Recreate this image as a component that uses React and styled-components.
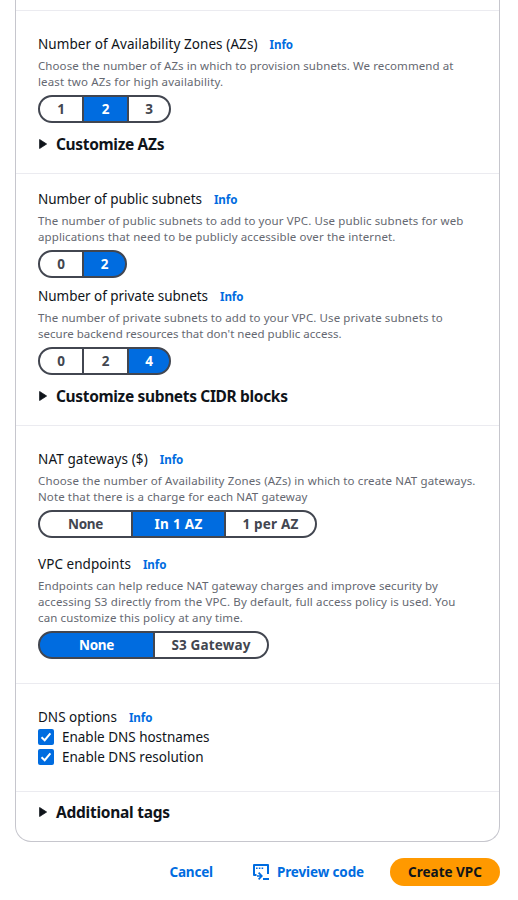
import React from 'react';
import styled, { createGlobalStyle } from 'styled-components';

const color = {
  text: '#0f141a',
  muted: '#656871',
  control: '#424650',
  blue: '#006ce0',
  orange: '#ff9900',
  border: '#c6c6cd',
  divider: '#ebebf0',
};

const GlobalStyle = createGlobalStyle`
  * { box-sizing: border-box; }
  body {
    margin: 0;
    background: #fff;
    color: ${color.text};
    font-family: 'Noto Sans', 'Open Sans', sans-serif;
    font-size: 13.5px;
    line-height: 20px;
  }
  button { font-family: inherit; margin: 0; }
`;

const Page = styled.main`
  width: 518px;
  height: 900px;
  padding: 0 18px 0 15px;
  overflow: hidden;
`;

const Card = styled.div`
  height: 842px;
  border: 1px solid ${color.border};
  border-top: 0;
  border-radius: 0 0 16px 16px;
  padding-top: 10px;
`;

const Section = styled.section`
  height: ${(p) => p.$height}px;
  padding: ${(p) => p.$top ?? 23}px 22px 0;
  border-top: 1px solid ${color.divider};
`;

const Field = styled.div`
  display: flex;
  flex-direction: column;
  align-items: flex-start;
  margin-bottom: ${(p) => p.$after ?? 0}px;
`;

const LabelRow = styled.div`
  display: flex;
  align-items: center;
  gap: 12px;
  height: 20px;
`;

const Label = styled.span`
  white-space: nowrap;
  letter-spacing: ${(p) => p.$track ?? 0}px;
`;

const InfoLink = styled.a`
  padding-top: 1px;
  color: ${color.blue};
  font-size: 11.6px;
  font-weight: 700;
  letter-spacing: -0.1px;
`;

const Description = styled.div`
  margin: 4px 0 5px;
`;

const Line = styled.div`
  color: ${color.muted};
  font-size: 11.5px;
  line-height: 16px;
  white-space: nowrap;
  letter-spacing: ${(p) => p.$track}px;
`;

const Segments = styled.div`
  display: flex;
  height: 28px;
  border: 2px solid ${color.control};
  border-radius: 14px;
  background: ${color.control};
  gap: 2px;
  overflow: hidden;
`;

const Segment = styled.button`
  width: ${(p) => p.$width}px;
  padding: 0;
  border: 0;
  background: ${(p) => (p.$on ? color.blue : '#fff')};
  color: ${(p) => (p.$on ? '#fff' : color.control)};
  font-size: 13.5px;
  font-weight: 700;
  line-height: 24px;
  white-space: nowrap;
  letter-spacing: ${(p) => p.$track ?? 0}px;
`;

const ExpandRow = styled.div`
  display: flex;
  align-items: center;
  gap: 9px;
  height: 22px;
  margin-top: ${(p) => p.$top ?? 0}px;
  padding-left: 1px;
`;

const ExpandTitle = styled.span`
  font-size: 15.5px;
  font-weight: 700;
  line-height: 22px;
  white-space: nowrap;
  letter-spacing: ${(p) => p.$track}px;
`;

const CheckRow = styled.label`
  display: flex;
  align-items: center;
  gap: 8px;
  height: 20px;
`;

const CheckBox = styled.span`
  display: flex;
  width: 16px;
  height: 16px;
  border-radius: 2px;
  background: ${color.blue};
`;

const Footer = styled.footer`
  display: flex;
  align-items: center;
  justify-content: flex-end;
  height: 28px;
  margin-top: 16px;
`;

const TextButton = styled.button`
  display: flex;
  align-items: center;
  gap: 8px;
  padding: 0;
  border: 0;
  margin-right: ${(p) => p.$after}px;
  background: none;
  color: ${color.blue};
  font-size: 13.5px;
  font-weight: 700;
  line-height: 20px;
  white-space: nowrap;
  letter-spacing: ${(p) => p.$track}px;
`;

const PrimaryButton = styled.button`
  width: 110px;
  height: 28px;
  padding: 0;
  border: 0;
  border-radius: 14px;
  background: ${color.orange};
  color: ${color.text};
  font-size: 13.5px;
  font-weight: 700;
  line-height: 28px;
`;

const Caret = () => (
  <svg width="8" height="10" viewBox="0 0 8 10" aria-hidden="true">
    <path d="M0.6 0.5 7.6 5 0.6 9.5Z" fill={color.text} stroke={color.text} strokeWidth="0.8" strokeLinejoin="round" />
  </svg>
);

const Check = () => (
  <svg width="16" height="16" viewBox="0 0 16 16" aria-hidden="true">
    <path d="M3.5 8.2 6.7 11.2 12.4 4.4" fill="none" stroke="#fff" strokeWidth="2" />
  </svg>
);

const CodeIcon = () => (
  <svg width="16" height="16" viewBox="0 0 16 16" fill="none" stroke={color.blue} aria-hidden="true">
    <path d="M3.5 11H1V1H15V10" strokeWidth="2" strokeLinejoin="round" />
    <path d="M3 4.2H4.6M5.8 4.2H7.4M8.6 4.2H10.2" strokeWidth="1.6" />
    <path d="M4 12H8.6M5.6 8.6 8.8 12 5.6 15.3" strokeWidth="1.7" />
    <path d="M10 15H16" strokeWidth="2" />
  </svg>
);

function Choice({ options }) {
  return (
    <Segments>
      {options.map(([text, width, on, track]) => (
        <Segment key={text} $width={width} $on={on} $track={track}>{text}</Segment>
      ))}
    </Segments>
  );
}

function ChoiceField({ label, track, lines, options, after }) {
  return (
    <Field $after={after}>
      <LabelRow>
        <Label $track={track}>{label}</Label>
        <InfoLink>Info</InfoLink>
      </LabelRow>
      <Description>
        {lines.map(([text, t]) => <Line key={text} $track={t}>{text}</Line>)}
      </Description>
      <Choice options={options} />
    </Field>
  );
}

function Expander({ title, track, top }) {
  return (
    <ExpandRow $top={top}>
      <Caret />
      <ExpandTitle $track={track}>{title}</ExpandTitle>
    </ExpandRow>
  );
}

export default function App() {
  return (
    <>
      <GlobalStyle />
      <Page>
        <Card>
          <Section $height={163}>
            <ChoiceField
              label="Number of Availability Zones (AZs)"
              track={0.078}
              lines={[
                ['Choose the number of AZs in which to provision subnets. We recommend at', 0.087],
                ['least two AZs for high availability.', 0.155],
              ]}
              options={[['1', 42], ['2', 43, true], ['3', 40]]}
            />
            <Expander title="Customize AZs" track={-0.33} top={10} />
          </Section>

          <Section $height={252} $top={15}>
            <ChoiceField
              label="Number of public subnets"
              track={-0.038}
              lines={[
                ['The number of public subnets to add to your VPC. Use public subnets for web', 0.103],
                ['applications that need to be publicly accessible over the internet.', 0.117],
              ]}
              options={[['0', 42], ['2', 41, true]]}
              after={8}
            />
            <ChoiceField
              label="Number of private subnets"
              track={-0.03}
              lines={[
                ['The number of private subnets to add to your VPC. Use private subnets to', 0.102],
                ["secure backend resources that don't need public access.", 0.018],
              ]}
              options={[['0', 42], ['2', 43], ['4', 40, true]]}
            />
            <Expander title="Customize subnets CIDR blocks" track={-0.34} top={10} />
          </Section>

          <Section $height={258}>
            <ChoiceField
              label="NAT gateways ($)"
              track={0.12}
              lines={[
                ['Choose the number of Availability Zones (AZs) in which to create NAT gateways.', 0.133],
                ['Note that there is a charge for each NAT gateway', 0.11],
              ]}
              options={[['None', 91, false, -0.3], ['In 1 AZ', 91, true, 0.3], ['1 per AZ', 89, false, 0.2]]}
              after={16}
            />
            <ChoiceField
              label="VPC endpoints"
              track={0.055}
              lines={[
                ['Endpoints can help reduce NAT gateway charges and improve security by', 0.087],
                ['accessing S3 directly from the VPC. By default, full access policy is used. You', 0.129],
                ['can customize this policy at any time.', 0.122],
              ]}
              options={[['None', 113, true, -0.3], ['S3 Gateway', 112, false, 0.15]]}
            />
          </Section>

          <Section $height={108}>
            <Field>
              <LabelRow>
                <Label $track={0.01}>DNS options</Label>
                <InfoLink>Info</InfoLink>
              </LabelRow>
              <CheckRow>
                <CheckBox><Check /></CheckBox>
                <Label $track={-0.02}>Enable DNS hostnames</Label>
              </CheckRow>
              <CheckRow>
                <CheckBox><Check /></CheckBox>
                <Label $track={0}>Enable DNS resolution</Label>
              </CheckRow>
            </Field>
          </Section>

          <Section $height={50} $top={9}>
            <Expander title="Additional tags" track={-0.25} />
          </Section>
        </Card>

        <Footer>
          <TextButton $track={-0.2} $after={40}>Cancel</TextButton>
          <TextButton $track={-0.12} $after={26}>
            <CodeIcon />
            Preview code
          </TextButton>
          <PrimaryButton>Create VPC</PrimaryButton>
        </Footer>
      </Page>
    </>
  );
}
